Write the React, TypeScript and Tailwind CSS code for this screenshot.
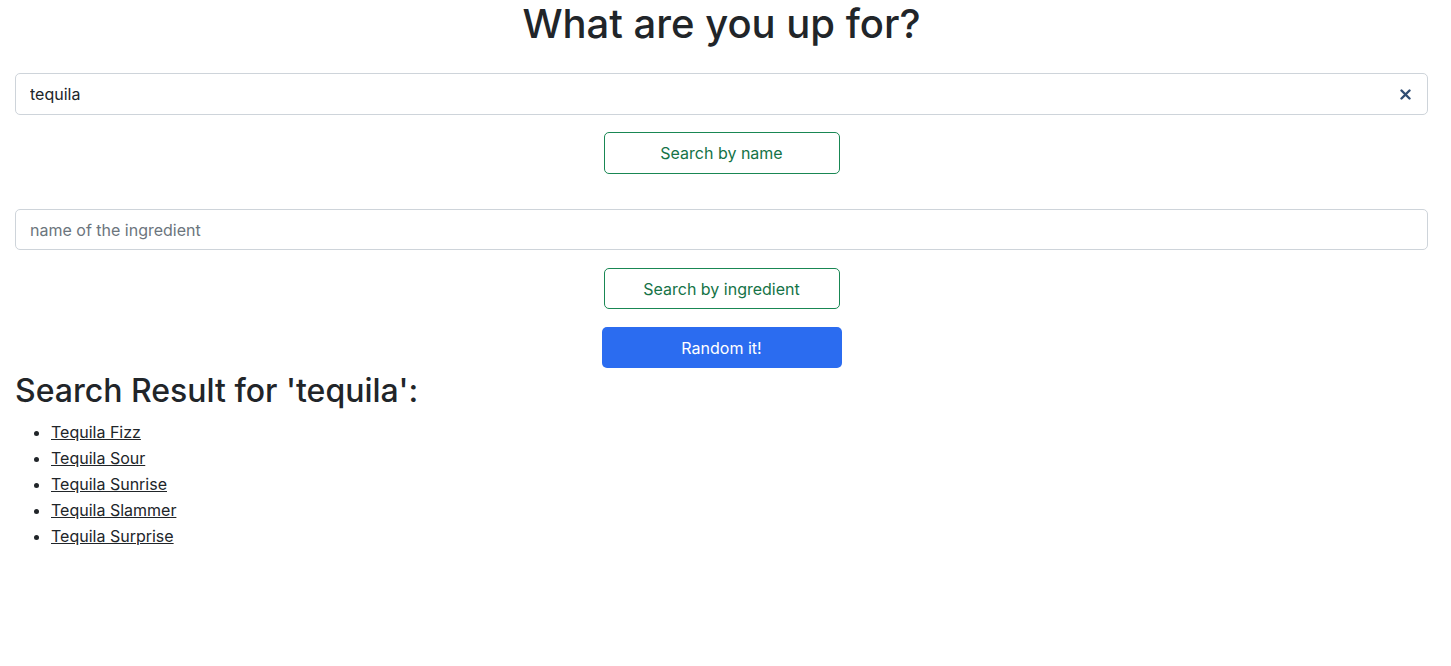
import React from "react";

export default function App() {
  const items = ["Tequila Fizz", "Tequila Sour", "Tequila Sunrise", "Tequila Slammer", "Tequila Surprise"];
  return (
    <div className="w-[1443px] px-[15px] text-[#212529] bg-white min-h-[666px]" style={{ fontFamily: "Inter, 'Noto Sans', sans-serif" }}>
      <h1 className="text-[40px] leading-[48px] font-medium text-center m-0">What are you up for?</h1>
      <div className="mt-[25px] relative">
        <input
          readOnly
          value="tequila"
          className="w-full h-[42px] border border-[#ced4da] rounded-[5px] pl-[14px] pr-10 text-[16px] text-[#212529] outline-none"
        />
        <svg className="absolute right-[17px] top-[16px]" width="11" height="11" viewBox="0 0 11 11">
          <path d="M1.5 1.5 L9.5 9.5 M9.5 1.5 L1.5 9.5" stroke="#2f4c73" strokeWidth="2.4" strokeLinecap="round" />
        </svg>
      </div>
      <div className="flex justify-center mt-[17px]">
        <button className="w-[236px] h-[42px] border border-[#198754] text-[#157347] rounded-[5px] text-[16px] bg-white">Search by name</button>
      </div>
      <div className="mt-[35px]">
        <input
          readOnly
          placeholder="name of the ingredient"
          className="w-full h-[41px] border border-[#ced4da] rounded-[5px] pl-[14px] text-[16px] placeholder-[#6c757d] outline-none"
        />
      </div>
      <div className="flex justify-center mt-[18px]">
        <button className="w-[236px] h-[41px] border border-[#198754] text-[#157347] rounded-[5px] text-[16px] bg-white">Search by ingredient</button>
      </div>
      <div className="flex justify-center mt-[18px]">
        <button className="w-[240px] h-[41px] bg-[#2b6cf0] text-white rounded-[5px] text-[16px]">Random it!</button>
      </div>
      <h2 className="text-[32px] leading-[40px] font-medium m-0 mt-[3px]">Search Result for 'tequila':</h2>
      <ul className="list-disc pl-[36px] mt-[8px] text-[16px] leading-[26px]">
        {items.map((i) => (
          <li key={i}>
            <a href="#" className="underline text-[#212529]">{i}</a>
          </li>
        ))}
      </ul>
    </div>
  );
}
